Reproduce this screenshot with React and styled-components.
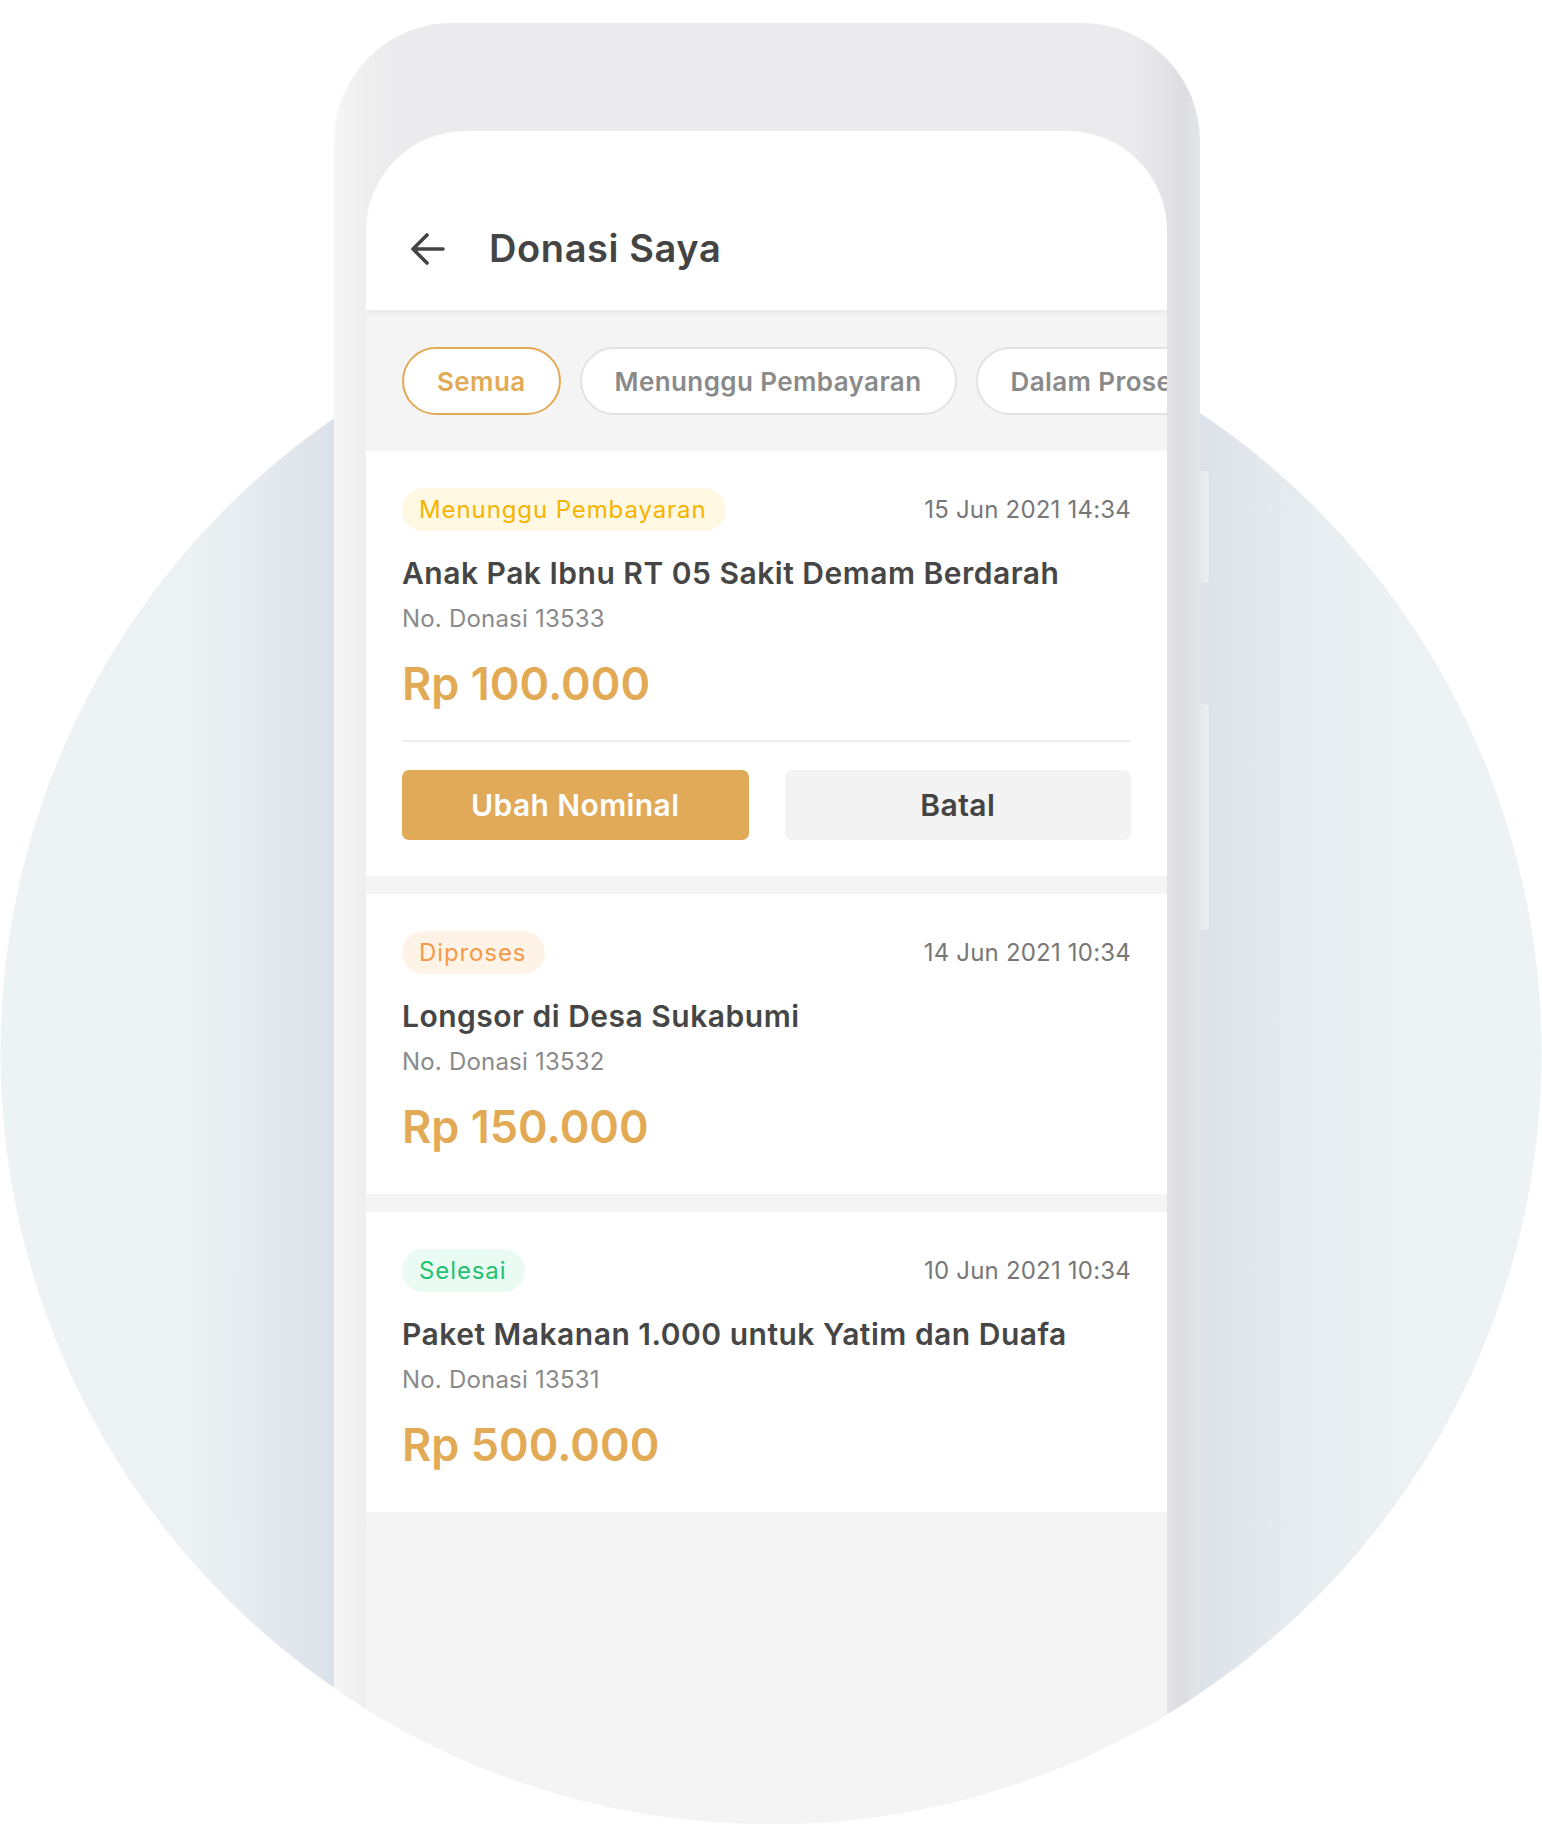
import React from "react";
import styled, { createGlobalStyle } from "styled-components";

const GlobalStyle = createGlobalStyle`
  body {
    margin: 0;
    background: #ffffff;
    font-family: Inter, "Noto Sans", sans-serif;
  }
`;

const Stage = styled.div`
  width: 1542px;
  height: 1824px;
  box-sizing: border-box;
  padding: 23px 0 0 334px;
  overflow: hidden;
  border-radius: 0 0 771px 771px / 0 0 771px 771px;
  background:
    radial-gradient(circle 771px at 771px 1053px, transparent 770px, #ffffff 771px),
    linear-gradient(
      90deg,
      #edf2f4 0px,
      #ecf1f3 190px,
      #dce2e9 334px,
      #dce2e9 1200px,
      #e6ebef 1290px,
      #ecf1f3 1400px,
      #edf2f4 1542px
    );
`;

const Phone = styled.div`
  position: relative;
  width: 866px;
  height: 1900px;
  box-sizing: border-box;
  padding: 108px 33px 0 32px;
  border-radius: 118px 118px 0 0;
  background: linear-gradient(
    90deg,
    #f6f6f7 0px,
    #efeff0 30px,
    #ebebed 60px,
    #ebebed 800px,
    #e2e2e6 835px,
    #dcdce1 850px,
    #e4e5e9 866px
  );
`;

const SideKey = styled.div`
  position: absolute;
  right: -10px;
  top: ${(p) => p.top}px;
  width: 10px;
  height: ${(p) => p.h}px;
  border-radius: 0 4px 4px 0;
  background: linear-gradient(90deg, #e6e8ec, #eef1f4);
  box-shadow: inset -1px 0 0 #d9dde3;
`;

const Screen = styled.div`
  height: 100%;
  border-radius: 100px 100px 0 0;
  overflow: hidden;
  background: #f4f4f4;
`;

const Header = styled.div`
  position: relative;
  z-index: 1;
  height: 179px;
  box-sizing: border-box;
  padding: 94px 43px 0;
  display: flex;
  align-items: flex-start;
  gap: 42px;
  background: #ffffff;
  box-shadow: 0 3px 6px rgba(0, 0, 0, 0.05);
`;

const BackIcon = styled.svg`
  width: 38px;
  height: 38px;
  margin-top: 5px;
  flex-shrink: 0;
`;

const Title = styled.h1`
  margin: 0;
  font-size: 38px;
  line-height: 46px;
  font-weight: 600;
  color: #444444;
  letter-spacing: 0.6px;
`;

const Tabs = styled.div`
  display: flex;
  gap: 19px;
  padding: 37px 36px 36px;
  overflow: hidden;
`;

const Pill = styled.div`
  flex-shrink: 0;
  height: 68px;
  box-sizing: border-box;
  padding: 0 33px;
  display: flex;
  align-items: center;
  border-radius: 34px;
  background: #ffffff;
  border: 2px solid ${(p) => (p.active ? "#e3aa55" : "#e2e2e2")};
  color: ${(p) => (p.active ? "#e3aa55" : "#8a8a8a")};
  font-size: 26px;
  font-weight: 600;
  letter-spacing: 0.4px;
  white-space: nowrap;
`;

const List = styled.div`
  display: flex;
  flex-direction: column;
  gap: 18px;
`;

const Card = styled.div`
  background: #ffffff;
  padding: 37px 36px ${(p) => (p.actions ? 36 : 40)}px;
`;

const TopRow = styled.div`
  display: flex;
  justify-content: space-between;
  align-items: center;
`;

const Badge = styled.span`
  height: 43px;
  display: inline-flex;
  align-items: center;
  padding: 0 19px 0 17px;
  border-radius: 22px;
  background: ${(p) => p.bg};
  color: ${(p) => p.fg};
  font-size: 24px;
  letter-spacing: 0.9px;
`;

const DateText = styled.span`
  font-size: 24px;
  color: #777777;
  letter-spacing: 0.2px;
`;

const CardTitle = styled.h2`
  margin: 24px 0 0;
  font-size: 30px;
  line-height: 36px;
  font-weight: 600;
  color: #464646;
  letter-spacing: 0.5px;
`;

const DonationNo = styled.div`
  margin-top: 13px;
  font-size: 24px;
  line-height: 30px;
  color: #8a8a8a;
  letter-spacing: 0.2px;
`;

const Amount = styled.div`
  margin-top: 23px;
  font-size: 45px;
  line-height: 54px;
  font-weight: 600;
  color: #e3aa56;
`;

const Divider = styled.hr`
  margin: 29px 0 0;
  border: none;
  height: 2px;
  background: #eeeeee;
`;

const Actions = styled.div`
  margin-top: 28px;
  display: grid;
  grid-template-columns: 1fr 1fr;
  gap: 36px;
`;

const Button = styled.button`
  height: 70px;
  border: none;
  border-radius: 7px;
  background: ${(p) => (p.primary ? "#e1aa58" : "#f3f3f3")};
  color: ${(p) => (p.primary ? "#ffffff" : "#444444")};
  font-family: inherit;
  font-size: 30px;
  font-weight: 600;
  letter-spacing: 0.4px;
`;

const statusColors = {
  wait: { bg: "#fff8e3", fg: "#f5b400" },
  process: { bg: "#fff3e8", fg: "#f5994a" },
  done: { bg: "#e9fbf2", fg: "#1fc270" },
};

const donations = [
  {
    status: "wait",
    label: "Menunggu Pembayaran",
    date: "15 Jun 2021 14:34",
    title: "Anak Pak Ibnu RT 05 Sakit Demam Berdarah",
    no: "13533",
    amount: "Rp 100.000",
    actions: true,
  },
  {
    status: "process",
    label: "Diproses",
    date: "14 Jun 2021 10:34",
    title: "Longsor di Desa Sukabumi",
    no: "13532",
    amount: "Rp 150.000",
  },
  {
    status: "done",
    label: "Selesai",
    date: "10 Jun 2021 10:34",
    title: "Paket Makanan 1.000 untuk Yatim dan Duafa",
    no: "13531",
    amount: "Rp 500.000",
  },
];

export default function App() {
  return (
    <>
      <GlobalStyle />
      <Stage>
        <Phone>
          <SideKey top={448} h={112} />
          <SideKey top={681} h={226} />
          <Screen>
            <Header>
              <BackIcon viewBox="0 0 38 38" fill="none">
                <path
                  d="M34 19H5M18 5L4 19l14 14"
                  stroke="#444444"
                  strokeWidth="3.6"
                  strokeLinecap="round"
                  strokeLinejoin="round"
                />
              </BackIcon>
              <Title>Donasi Saya</Title>
            </Header>
            <Tabs>
              <Pill active>Semua</Pill>
              <Pill>Menunggu Pembayaran</Pill>
              <Pill>Dalam Proses</Pill>
            </Tabs>
            <List>
              {donations.map((d) => (
                <Card key={d.no} actions={d.actions}>
                  <TopRow>
                    <Badge bg={statusColors[d.status].bg} fg={statusColors[d.status].fg}>
                      {d.label}
                    </Badge>
                    <DateText>{d.date}</DateText>
                  </TopRow>
                  <CardTitle>{d.title}</CardTitle>
                  <DonationNo>No. Donasi {d.no}</DonationNo>
                  <Amount>{d.amount}</Amount>
                  {d.actions && (
                    <>
                      <Divider />
                      <Actions>
                        <Button primary>Ubah Nominal</Button>
                        <Button>Batal</Button>
                      </Actions>
                    </>
                  )}
                </Card>
              ))}
            </List>
          </Screen>
        </Phone>
      </Stage>
    </>
  );
}
